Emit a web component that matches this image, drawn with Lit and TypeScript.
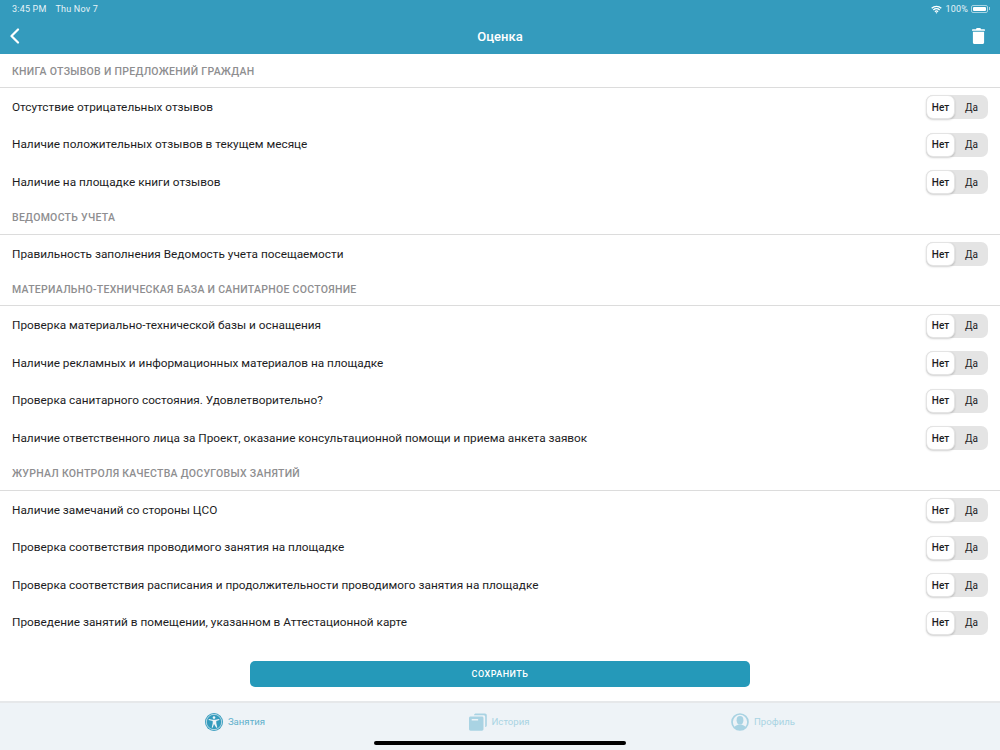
import { LitElement, html, css, svg } from "lit";
import { customElement } from "lit/decorators.js";

const sections = [
  {
    title: "Книга отзывов и предложений граждан",
    rows: [
      "Отсутствие отрицательных отзывов",
      "Наличие положительных отзывов в текущем месяце",
      "Наличие на площадке книги отзывов",
    ],
  },
  {
    title: "Ведомость учета",
    rows: ["Правильность заполнения Ведомость учета посещаемости"],
  },
  {
    title: "Материально-техническая база и санитарное состояние",
    rows: [
      "Проверка материально-технической базы и оснащения",
      "Наличие рекламных и информационных материалов на площадке",
      "Проверка санитарного состояния. Удовлетворительно?",
      "Наличие ответственного лица за Проект, оказание консультационной помощи и приема анкета заявок",
    ],
  },
  {
    title: "Журнал контроля качества досуговых занятий",
    rows: [
      "Наличие замечаний со стороны ЦСО",
      "Проверка соответствия проводимого занятия на площадке",
      "Проверка соответствия расписания и продолжительности проводимого занятия на площадке",
      "Проведение занятий в помещении, указанном в Аттестационной карте",
    ],
  },
];

const wifiIcon = svg`<svg width="11" height="9" viewBox="0 0 16 12" fill="none" stroke="#fff" stroke-width="1.9">
  <path d="M1 4.2a10 10 0 0 1 14 0" /><path d="M3.4 6.8a6.6 6.6 0 0 1 9.2 0" /><path d="M5.7 9.2a3.3 3.3 0 0 1 4.6 0" />
  <circle cx="8" cy="10.8" r="0.6" fill="#fff" stroke-width="1" />
</svg>`;

const trashIcon = svg`<svg width="13" height="16" viewBox="0 0 13 16" fill="#fff">
  <path d="M4.6 0h3.8l.6 1.2h3.3c.4 0 .7.3.7.7v.9H0v-.9c0-.4.3-.7.7-.7H4z" />
  <path d="M.9 3.8h11.2v10.7c0 .8-.7 1.5-1.5 1.5H2.400c-.8 0-1.500-.7-1.500-1.500z" />
</svg>`;

const classesIcon = svg`<svg width="18" height="18" viewBox="0 0 18 18">
  <circle cx="9" cy="9" r="9" fill="#349bbd" />
  <circle cx="9" cy="9" r="7.700" fill="none" stroke="#eef3f7" stroke-width=".7" />
  <circle cx="9" cy="4.600" r="1.300" fill="#eef3f7" />
  <path d="M3.900 6.100l3.500.7h3.200l3.500-.7.300.9-3.100 1v2.300l1 4.200-1 .2L9 10.900l-1.300 3.800-1-.2 1-4.200V8L3.600 7z" fill="#eef3f7" />
</svg>`;

const historyIcon = svg`<svg width="18" height="18" viewBox="0 0 18 18" fill="#a9d3e3">
  <path d="M5 2.200C5 1 6 .4 7 .4h9c1 0 1.800.8 1.800 1.800v10c0 1-.6 1.800-1.600 1.800V3.800c0-.9-.7-1.600-1.600-1.600z" />
  <path d="M1.600 3.500h11.300c.9 0 1.600.7 1.600 1.600v11c0 .9-.7 1.600-1.600 1.600H1.600C.7 17.700 0 17 0 16.100v-11c0-.9.700-1.600 1.600-1.600z" />
  <rect x="2.600" y="6" width="6.600" height="1.400" rx=".5" fill="#eef3f7" />
</svg>`;

const profileIcon = svg`<svg width="18" height="18" viewBox="0 0 18 18">
  <circle cx="9" cy="9" r="8" fill="none" stroke="#a9d3e3" stroke-width="1.700" />
  <ellipse cx="9" cy="7.200" rx="3.400" ry="4.200" fill="#a9d3e3" />
  <path d="M3.400 14.800c.5-2.200 3-2.500 4.300-3.200h2.600c1.300.7 3.800 1 4.300 3.200A8 8 0 0 1 9 17a8 8 0 0 1-5.600-2.200z" fill="#a9d3e3" />
</svg>`;

@customElement("app-root")
export class AppRoot extends LitElement {
  static styles = css`
    :host {
      display: flex;
      flex-direction: column;
      width: 1000px;
      height: 750px;
      background: #fff;
      font-family: Roboto, "Noto Sans", sans-serif;
      overflow: hidden;
      position: relative;
    }
    .top {
      height: 54px;
      flex: none;
      background: #349bbd;
      color: #fff;
      display: flex;
      flex-direction: column;
    }
    .status {
      height: 18px;
      display: flex;
      align-items: center;
      justify-content: space-between;
      padding: 0 12px 0 12px;
      font-size: 9px;
      letter-spacing: 0.2px;
      color: #e6f3f8;
    }
    .status .left {
      display: flex;
      gap: 9px;
    }
    .status .right {
      display: flex;
      align-items: center;
      gap: 3px;
    }
    .battery {
      box-sizing: border-box;
      width: 17px;
      height: 8px;
      padding: 1px;
      border: 1px solid #a6d4e4;
      border-radius: 2px;
      display: flex;
      position: relative;
    }
    .battery::after {
      content: "";
      position: absolute;
      right: -3px;
      top: 1px;
      width: 1px;
      height: 3px;
      background: #a6d4e4;
    }
    .battery i {
      flex: 1;
      background: #fff;
      border-radius: 1px;
    }
    .nav {
      flex: 1;
      display: flex;
      align-items: center;
      justify-content: space-between;
      padding: 0 15px 0 9px;
      position: relative;
    }
    .nav h1 {
      position: absolute;
      left: 0;
      right: 0;
      margin: 0;
      text-align: center;
      font-size: 13px;
      font-weight: 500;
    }
    .nav svg {
      display: block;
    }
    .section-title {
      height: 32px;
      padding-top: 1px;
      display: flex;
      align-items: center;
      padding-left: 12px;
      border-bottom: 1px solid #dcdcdc;
      font-size: 10.500px;
      font-weight: 500;
      letter-spacing: 0.28px;
      color: #8e8e90;
      text-transform: uppercase;
    }
    .row {
      height: 37.600px;
      display: flex;
      align-items: center;
      justify-content: space-between;
      padding: 0 12px;
      font-size: 11.800px;
      color: #1c1c1e;
    }
    .toggle {
      width: 62px;
      height: 24px;
      margin-top: 1px;
      background: #e4e4e4;
      border-radius: 7px;
      display: grid;
      grid-template-columns: 29px 1fr;
      font-size: 10px;
      color: #1c1c1e;
    }
    .toggle span {
      display: flex;
      align-items: center;
      justify-content: center;
    }
    .toggle .on {
      background: #fff;
      border-radius: 7px;
      font-weight: 500;
      border: 1px solid #e4e4e4;
      box-shadow: 0 1px 2px rgba(0, 0, 0, 0.18);
    }
    .save-wrap {
      display: flex;
      justify-content: center;
      padding-top: 20px;
    }
    .save {
      width: 500px;
      height: 26px;
      border: none;
      border-radius: 5px;
      background: #2599b9;
      color: #fff;
      font: 500 9px Roboto, "Noto Sans", sans-serif;
      letter-spacing: 0.5px;
    }
    .tabs {
      margin-top: auto;
      height: 47px;
      border-top: 2px solid #e6e8ea;
      background: #eef3f7;
      padding-left: 103px;
      display: grid;
      grid-template-columns: repeat(3, 264px);
      flex: none;
    }
    .tab {
      display: flex;
      justify-content: center;
      align-items: center;
      gap: 5px;
      height: 37px;
      font-size: 9.600px;
      color: #a9d3e3;
    }
    .tab.active {
      color: #5fb0cc;
    }
    .tab svg {
      display: block;
    }
    .home {
      position: absolute;
      left: 374px;
      bottom: 5px;
      width: 252px;
      height: 4px;
      border-radius: 2px;
      background: #000;
    }
  `;

  render() {
    return html`
      <div class="top">
        <div class="status">
          <div class="left"><span>3:45 PM</span><span>Thu Nov 7</span></div>
          <div class="right">
            ${wifiIcon}<span>100%</span>
            <div class="battery"><i></i></div>
          </div>
        </div>
        <div class="nav">
          <svg width="11" height="16" viewBox="0 0 11 16" fill="none" stroke="#fff" stroke-width="2.200" stroke-linecap="round" stroke-linejoin="round">
            <path d="M9 1.500L2.500 8 9 14.500" />
          </svg>
          <h1>Оценка</h1>
          ${trashIcon}
        </div>
      </div>

      ${sections.map(
        (s) => html`
          <div class="section-title">${s.title}</div>
          ${s.rows.map(
            (r) => html`
              <div class="row">
                <span>${r}</span>
                <div class="toggle"><span class="on">Нет</span><span>Да</span></div>
              </div>
            `
          )}
        `
      )}

      <div class="save-wrap"><button class="save">СОХРАНИТЬ</button></div>

      <div class="tabs">
        <div class="tab active">${classesIcon}<span>Занятия</span></div>
        <div class="tab">${historyIcon}<span>История</span></div>
        <div class="tab">${profileIcon}<span>Профиль</span></div>
      </div>
      <div class="home"></div>
    `;
  }
}
